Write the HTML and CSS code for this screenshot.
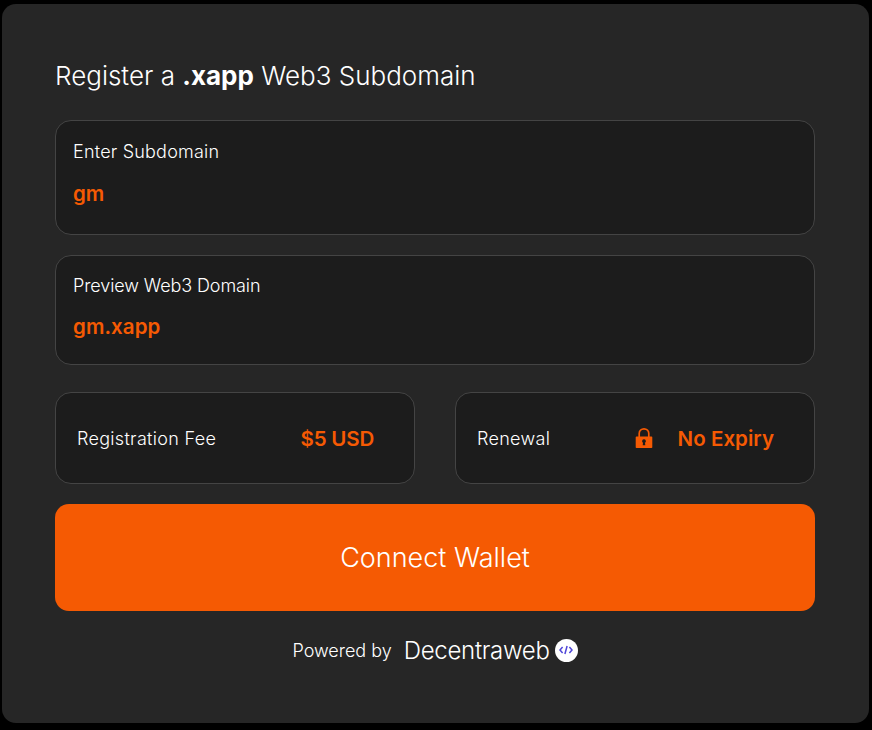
FILE: index.html
```html
<!DOCTYPE html>
<html lang="en">

<head>
    <meta charset="UTF-8">
    <meta name="viewport" content="width=device-width, initial-scale=1.0">
    <title>Register a .xapp Web3 Subdomain</title>
    <link rel="stylesheet" href="styles.css">
</head>

<body>
    <div class="card">
        <h1 class="title">Register a <b>.xapp</b> Web3 Subdomain</h1>

        <div class="field field-enter">
            <div class="field-label">Enter Subdomain</div>
            <div class="field-value">gm</div>
        </div>

        <div class="field field-preview">
            <div class="field-label">Preview Web3 Domain</div>
            <div class="field-value">gm.xapp</div>
        </div>

        <div class="info-row">
            <div class="info-box">
                <span class="info-label">Registration Fee</span>
                <span class="info-value fee">$5 USD</span>
            </div>
            <div class="info-box">
                <span class="info-label">Renewal</span>
                <svg class="lock" width="18" height="22" viewBox="0 0 18 22">
                    <path d="M4.2 10V6.6a4.8 4.8 0 0 1 9.6 0V10" fill="none" stroke="#f55a03" stroke-width="1.7" />
                    <path fill="#f55a03" fill-rule="evenodd"
                        d="M1.5 9.5h15a.8.8 0 0 1 .8.8v9.9a.8.8 0 0 1-.8.8h-15a.8.8 0 0 1-.8-.8v-9.9a.8.8 0 0 1 .8-.8zM9 12.3a1.9 1.9 0 0 0-1 3.5l-.3 2.5h2.6l-.3-2.5a1.9 1.9 0 0 0-1-3.5z" />
                </svg>
                <span class="info-value expiry">No Expiry</span>
            </div>
        </div>

        <button class="connect">Connect Wallet</button>

        <div class="footer">
            <span class="powered">Powered by</span>
            <span class="brand">Decentraweb</span>
            <span class="brand-badge">
                <svg width="14" height="10" viewBox="0 0 14 10">
                    <path d="M3.6 2 1 5l2.6 3M10.4 2 13 5l-2.6 3M8.1 1 5.9 9" fill="none" stroke="#4f46d8"
                        stroke-width="1.5" />
                </svg>
            </span>
        </div>
    </div>
</body>

</html>
```

FILE: styles.css
```css
* {
    box-sizing: border-box;
}

body {
    margin: 0;
    padding: 4px 3px 7px 2px;
    background: #000;
    font-family: Inter, "Liberation Sans", sans-serif;
    color: #fff;
}

.card {
    height: 719px;
    padding: 52px 54px 0 53px;
    background: #262626;
    border-radius: 14px;
}

.title {
    margin: 0 0 24px;
    font-size: 26px;
    line-height: 40px;
    font-weight: 350;
}

.title b {
    font-weight: 700;
}

.field {
    padding: 20px 17px 0;
    margin-bottom: 20px;
    background: #1c1c1c;
    border: 1px solid #444;
    border-radius: 16px;
}

.field-enter {
    height: 115px;
}

.field-preview {
    height: 110px;
    padding-top: 19px;
    margin-bottom: 27px;
}

.field-label {
    font-size: 18px;
    line-height: 22px;
    font-weight: 350;
    letter-spacing: 0.2px;
}

.field-preview .field-label {
    letter-spacing: -0.1px;
}

.field-value {
    margin-top: 17px;
    font-size: 20.5px;
    line-height: 28px;
    font-weight: 600;
    color: #f55a03;
}

.field-preview .field-value {
    margin-top: 16px;
    letter-spacing: 0.1px;
}

.info-row {
    display: flex;
    justify-content: space-between;
    margin-bottom: 20px;
}

.info-box {
    display: flex;
    align-items: center;
    width: 360px;
    height: 92px;
    padding: 0 20px 0 21px;
    background: #1c1c1c;
    border: 1px solid #444;
    border-radius: 16px;
}

.info-label {
    font-size: 18px;
    font-weight: 350;
    letter-spacing: 0.3px;
}

.info-value {
    font-size: 20.5px;
    font-weight: 600;
    color: #f55a03;
}

.fee {
    margin-left: auto;
    margin-right: 20px;
    letter-spacing: -0.2px;
}

.lock {
    margin-left: auto;
    margin-right: 25px;
}

.expiry {
    margin-right: 20px;
    letter-spacing: 0.05px;
}

.connect {
    display: block;
    width: 100%;
    height: 107px;
    padding: 0;
    background: #f55a03;
    border: none;
    border-radius: 14px;
    color: #fff;
    font-family: inherit;
    font-size: 27px;
    font-weight: 350;
}

.footer {
    display: flex;
    justify-content: center;
    align-items: center;
    margin-top: 24px;
    height: 30px;
}

.powered {
    font-size: 18px;
    font-weight: 350;
    margin-right: 12px;
}

.brand {
    font-size: 24px;
    font-weight: 350;
    letter-spacing: -0.3px;
    margin-right: 5px;
}

.brand-badge {
    display: flex;
    align-items: center;
    justify-content: center;
    width: 23px;
    height: 23px;
    background: #fff;
    border-radius: 50%;
}
```
